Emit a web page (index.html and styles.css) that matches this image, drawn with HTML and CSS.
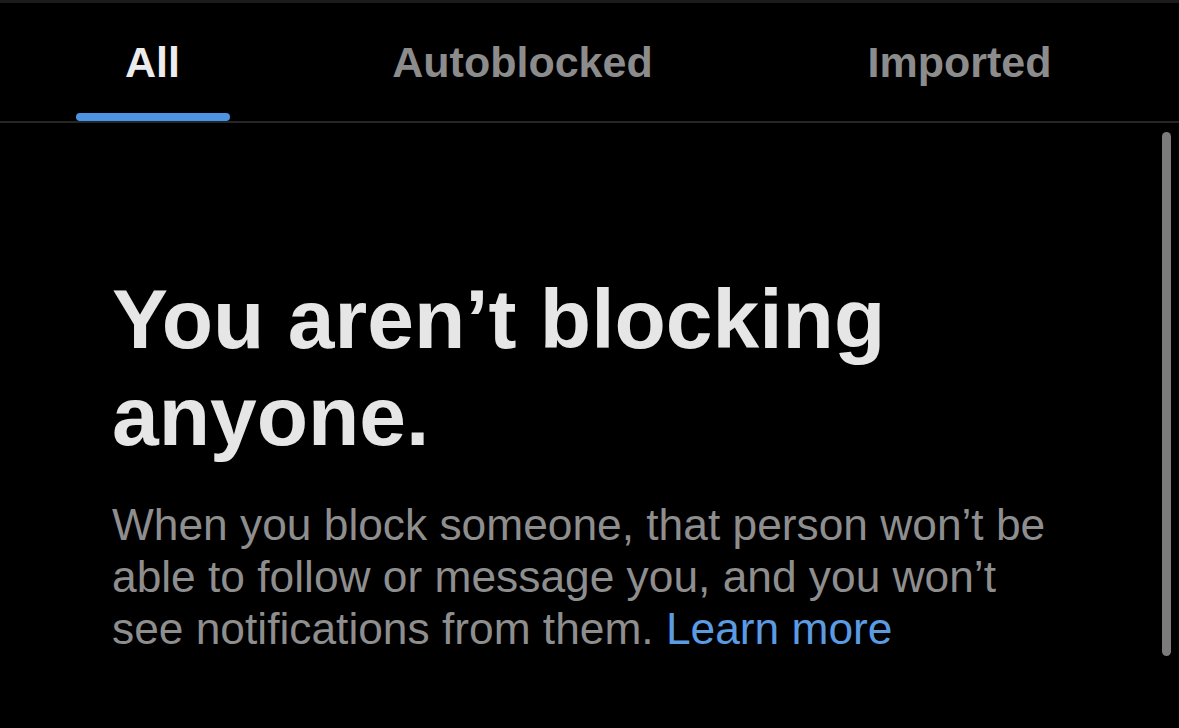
FILE: index.html
```html
<!DOCTYPE html>
<html lang="en">
<head>
<meta charset="utf-8">
<title>Blocked accounts</title>
<link rel="stylesheet" href="styles.css">
</head>
<body>
<div class="page">
  <nav class="tabs">
    <div class="tab tab-active">
      <span class="tab-label">All</span>
      <span class="tab-indicator"></span>
    </div>
    <div class="tab">
      <span class="tab-label">Autoblocked</span>
    </div>
    <div class="tab">
      <span class="tab-label">Imported</span>
    </div>
  </nav>
  <main class="content">
    <h1 class="title">You aren’t blocking anyone.</h1>
    <p class="desc">When you block someone, that person won’t be able to follow or message you, and you won’t see notifications from them. <a class="link" href="#">Learn more</a></p>
    <div class="scrollbar"></div>
  </main>
</div>
</body>
</html>
```

FILE: styles.css
```css
html, body {
  margin: 0;
  padding: 0;
  background: #000;
}

.page {
  width: 1179px;
  height: 728px;
  border-top: 3px solid #1c1c1c;
  box-sizing: border-box;
  font-family: "Liberation Sans", Arial, sans-serif;
  overflow: hidden;
}

.tabs {
  display: grid;
  grid-template-columns: 305px 435px 1fr;
  height: 118px;
  border-bottom: 2px solid #262626;
}

.tab {
  display: flex;
  flex-direction: column;
  align-items: center;
  padding-top: 38px;
  box-sizing: border-box;
}

.tab-label {
  font-size: 43px;
  line-height: 43px;
  font-weight: 700;
  color: #8c8c8c;
}

.tab-active .tab-label {
  color: #ececec;
}

.tab-indicator {
  margin-top: auto;
  width: 154px;
  height: 8px;
  border-radius: 4px;
  background: #4d93e3;
}

.content {
  position: relative;
  height: 605px;
  padding: 148px 0 0 112px;
  box-sizing: border-box;
}

.title {
  margin: 0;
  width: 920px;
  font-size: 84px;
  line-height: 97px;
  font-weight: 700;
  color: #e6e6e6;
}

.desc {
  margin: 34px 0 0;
  width: 950px;
  font-size: 44.3px;
  line-height: 52px;
  color: #8e8e8e;
}

.link {
  color: #5a9be3;
  text-decoration: none;
}

.scrollbar {
  position: absolute;
  left: 1162px;
  top: 9px;
  width: 9px;
  height: 524px;
  border-radius: 5px;
  background: #7b7b7b;
}
```
